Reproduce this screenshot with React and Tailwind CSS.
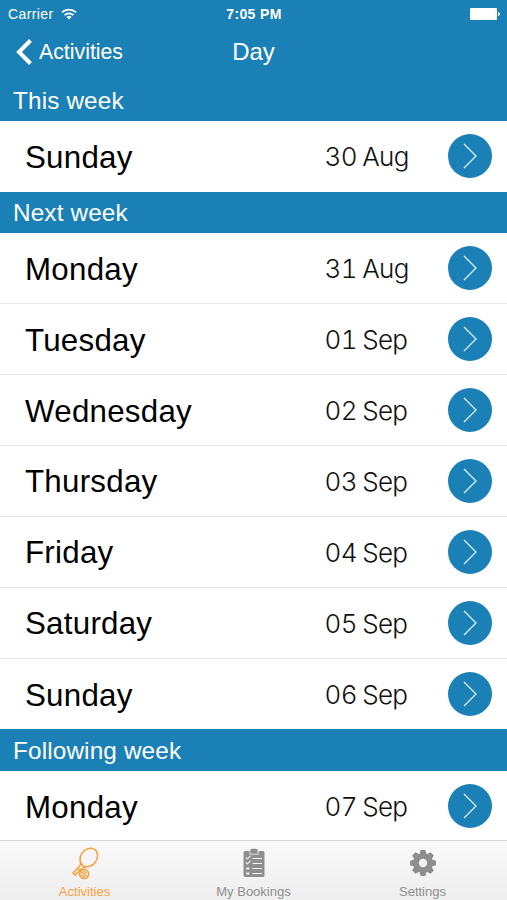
import clsx from 'clsx';

const weeks = [
  { title: 'This week', days: [['Sunday', '30 Aug']] },
  {
    title: 'Next week',
    days: [
      ['Monday', '31 Aug'],
      ['Tuesday', '01 Sep'],
      ['Wednesday', '02 Sep'],
      ['Thursday', '03 Sep'],
      ['Friday', '04 Sep'],
      ['Saturday', '05 Sep'],
      ['Sunday', '06 Sep'],
    ],
  },
  { title: 'Following week', days: [['Monday', '07 Sep']] },
];

const tabs = [
  { label: 'Activities', Icon: RacketIcon, active: true },
  { label: 'My Bookings', Icon: ClipboardIcon },
  { label: 'Settings', Icon: GearIcon },
];

function WifiIcon() {
  return (
    <svg width="16" height="12" viewBox="0 0 16 12" fill="none" stroke="white" strokeWidth="1.7">
      <path d="M1 4.400a10 10 0 0 1 14 0" />
      <path d="M3.600 7.200a6.300 6.300 0 0 1 8.800 0" />
      <path d="M8 11.400 5.500 8.900a3.600 3.600 0 0 1 5 0z" fill="white" stroke="none" />
    </svg>
  );
}

function BatteryIcon() {
  return (
    <svg width="30" height="12" viewBox="0 0 30 12" fill="white">
      <rect x="0" y="0" width="27" height="12" rx="1.2" />
      <path d="M28 4c2.400.6 2.400 3.400 0 4z" />
    </svg>
  );
}

function RacketIcon() {
  return (
    <svg width="30" height="34" viewBox="0 0 30 34" fill="none" stroke="currentColor" strokeWidth="1.5">
      <ellipse cx="18.8" cy="11.5" rx="8" ry="10" transform="rotate(38 18.8 11.5)" />
      <path d="M10.800 16.500c.2 2-.8 3.400-2.400 5L3 27l2.200 2.100 5.600-5.600c1.500-1.500 3.200-2.600 5.200-2.600" />
      <path d="M7.800 22.200l2.300 2.200" />
      <circle cx="14.2" cy="28" r="4.5" strokeWidth="1.6" />
      <path d="M11 25.500l6.400 5M13.500 24.500l3.500 2.700M11.500 28.500l3.300 2.700" strokeWidth="1.4" />
    </svg>
  );
}

function ClipboardIcon() {
  return (
    <svg width="22" height="30" viewBox="0 0 22 30" fill="none">
      <path d="M2 3h4.500v3.500h9V3H20a1.500 1.500 0 0 1 1.500 1.500v23A1.500 1.500 0 0 1 20 29H2a1.500 1.500 0 0 1-1.500-1.500v-23A1.500 1.500 0 0 1 2 3z" fill="currentColor" />
      <path d="M7.300 1.500C7.300.5 14.700.5 14.700 1.500v4.200H7.300z" fill="currentColor" />
      <path d="M9.500 10.500H19M9.500 15.500H19M9.500 20.500H19M9.500 25.500H19" stroke="#f3f3f3" strokeWidth="1" />
      <path d="M3 9.500l1.500 1.500 3-3.300M3 14.500l1.500 1.500 3-3.300" stroke="#f3f3f3" strokeWidth="1.1" />
      <path d="M3.300 19.500h3v2h-3zM3.300 24.500h3v2h-3z" fill="#f3f3f3" />
    </svg>
  );
}

function GearIcon() {
  return (
    <svg width="26" height="26" viewBox="-13 -13 26 26">
      <g fill="currentColor">
        {[0, 45, 90, 135].map(a => (
          <path key={a} d="M-2.300-13h4.600l1.200 4v18l-1.200 4h-4.600l-1.200-4V-9z" transform={`rotate(${a})`} />
        ))}
        <circle r="9.8" />
      </g>
      <circle r="4.2" fill="#f2f2f2" />
    </svg>
  );
}

function DayRow({ day, date, last }) {
  return (
    <div className={clsx('flex h-[70.86px] items-center bg-white pl-[25px] pr-[15px]', !last && 'border-b border-[#e6e6e6]')}>
      <span className="flex-1 pt-[2.5px] text-[31.3px] leading-none tracking-[0.25px] text-black">{day}</span>
      <span className="w-[123.5px] pt-[2px] font-[Inter] text-[26px] font-light leading-none tracking-[-0.65px] tabular-nums [word-spacing:-1px] text-[#111]">{date}</span>
      <span className="flex size-11 items-center justify-center rounded-full bg-[#1a80b6]">
        <svg width="16" height="28" viewBox="0 0 16 28" fill="none" stroke="#d5eaf5" strokeWidth="1.4">
          <path d="M2 2l12 12L2 26" />
        </svg>
      </span>
    </div>
  );
}

export default function App() {
  return (
    <div className="flex h-[900px] w-[507px] flex-col overflow-hidden bg-white font-['Liberation_Sans',Arial,sans-serif]">
      <header className="h-[79.5px] shrink-0 bg-[#1a80b6] text-white">
        {/* Status bar */}
        <div className="grid h-7 grid-cols-3 items-center pl-2 pr-[7px] text-[14px] leading-none">
          <div className="flex items-center gap-[7px]">
            <span className="tracking-[0.4px]">Carrier</span>
            <WifiIcon />
          </div>
          <span className="text-center font-bold tracking-[0.35px]">7:05 PM</span>
          <div className="flex justify-end"><BatteryIcon /></div>
        </div>
        {/* Nav bar */}
        <div className="grid h-12 grid-cols-3 items-center px-4">
          <div className="flex items-center gap-[7px]">
            <svg width="16" height="26" viewBox="0 0 16 26" fill="none" stroke="white" strokeWidth="4">
              <path d="M14.500 1.500L3 13l11.500 11.500" />
            </svg>
            <span className="pt-[2px] text-[21.3px] leading-none">Activities</span>
          </div>
          <span className="text-center text-[24px] leading-none">Day</span>
        </div>
      </header>

      {/* Week list, the last row runs under the tab bar */}
      <main className="min-h-0 flex-1 overflow-hidden">
        {weeks.map(week => (
          <section key={week.title}>
            <h2 className="flex h-[41.5px] items-center bg-[#1a80b6] pl-[13px] pt-[2px] text-[24.3px] leading-none tracking-[0.15px] text-white">{week.title}</h2>
            {week.days.map(([day, date], i) => (
              <DayRow key={date} day={day} date={date} last={i === week.days.length - 1} />
            ))}
          </section>
        ))}
      </main>

      {/* Tab bar */}
      <nav className="grid h-[60px] shrink-0 grid-cols-3 border-t border-[#d6d6d6] bg-linear-to-b from-[#fafafa] to-[#eeeeee]">
        {tabs.map(({ label, Icon, active }) => (
          <div key={label} className={clsx('flex flex-col items-center', active ? 'text-[#f7a040]' : 'text-[#8e8e8e]')}>
            <span className="flex h-[44px] items-center"><Icon /></span>
            <span className="text-[13px] leading-none">{label}</span>
          </div>
        ))}
      </nav>
    </div>
  );
}
